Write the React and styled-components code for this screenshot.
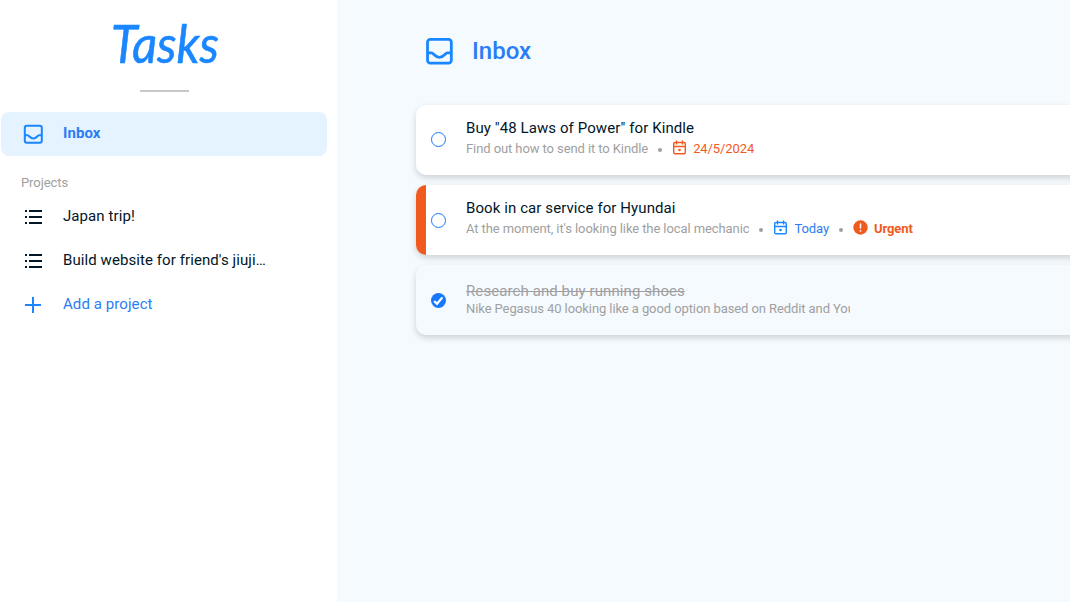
import React from "react";
import styled, { createGlobalStyle } from "styled-components";

const blue = "#1a86ff";
const textBlue = "#2a7df5";
const orange = "#f05a1e";

const GlobalStyle = createGlobalStyle`
  * { box-sizing: border-box; }
  body { margin: 0; overflow: hidden; font-family: Roboto, sans-serif; color: #011627; }
  h1, h2, h3, p, ul { margin: 0; padding: 0; font-weight: 400; }
  svg { display: block; flex: none; }
`;

const Page = styled.div`
  display: flex;
  width: 100%;
  height: 602px;
  overflow: hidden;
  background: #fff;
`;

const Sidebar = styled.aside`
  flex: 0 0 337px;
  padding: 16px 10px 0 1px;
  display: flex;
  flex-direction: column;
  background: #fff;
`;

const Brand = styled.div`
  height: 96px;
  display: flex;
  flex-direction: column;
  align-items: center;
`;

const Wordmark = styled.svg`
  width: 114px;
  height: 56px;
  overflow: visible;
  font-family: Lato, sans-serif;
  font-style: italic;
  font-size: 52px;
  fill: ${blue};
`;

const Divider = styled.div`
  width: 49px;
  height: 2px;
  margin-top: 18px;
  background: #c8c8c8;
`;

const NavItem = styled.div`
  display: flex;
  align-items: center;
  height: 44px;
  padding-left: 22px;
  border-radius: 8px;
  font-size: 15px;
  line-height: 20px;
  letter-spacing: 0.08px;
  font-weight: ${(p) => (p.$active ? 700 : 400)};
  background: ${(p) => (p.$active ? "#e5f2ff" : "transparent")};
  color: ${(p) => (p.$blue ? textBlue : "#011627")};
  span { padding-bottom: ${(p) => (p.$active ? 2 : 0)}px; }
`;

const NavLabel = styled.span`
  width: 204px;
  margin-left: 20px;
  overflow: hidden;
  white-space: nowrap;
  text-overflow: ellipsis;
`;

const SectionLabel = styled.h3`
  height: 38px;
  padding: 18px 0 0 20px;
  font-size: 13px;
  line-height: 17px;
  letter-spacing: -0.08px;
  color: #a0a0a0;
`;

const Main = styled.main`
  flex: 1;
  min-width: 0;
  padding: 37px 0 0 79px;
  background: #f5faff;
`;

const Heading = styled.header`
  display: flex;
  align-items: flex-start;
  height: 68px;
  padding-left: 9px;
`;

const Title = styled.h1`
  margin-left: 19px;
  font-size: 24px;
  line-height: 28px;
  font-weight: 500;
  color: ${textBlue};
`;

const TaskList = styled.div`
  display: flex;
  flex-direction: column;
  gap: 10px;
  width: 700px;
`;

const Card = styled.article`
  display: flex;
  align-items: center;
  height: 70px;
  border-radius: 10px;
  overflow: hidden;
  background: ${(p) => (p.$done ? "#f5faff" : "#fff")};
  box-shadow: 0 3px 6px rgba(0, 0, 0, 0.16);
`;

const Stripe = styled.div`
  width: 10px;
  align-self: stretch;
  background: ${(p) => (p.$urgent ? orange : "transparent")};
`;

const CheckSlot = styled.div`
  width: 40px;
  margin-top: ${(p) => p.$nudge}px;
  padding-left: 5px;
`;

const Body = styled.div`
  align-self: flex-start;
  padding-top: ${(p) => (p.$done ? 17 : 13)}px;
`;

const TaskTitle = styled.h2`
  font-size: 15px;
  line-height: ${(p) => (p.$done ? 18 : 20)}px;
  letter-spacing: 0.09px;
  white-space: nowrap;
  color: ${(p) => (p.$done ? "#a0a0a0" : "#011627")};
  text-decoration: ${(p) => (p.$done ? "line-through" : "none")};
`;

const Details = styled.div`
  display: flex;
  align-items: center;
  height: 20px;
  margin-top: ${(p) => (p.$done ? -1 : 1)}px;
  font-size: 13px;
  line-height: 20px;
  letter-spacing: -0.09px;
  color: #a0a0a0;
`;

const Description = styled.p`
  max-width: 384px;
  overflow: hidden;
  white-space: nowrap;
  line-height: 18px;
`;

const Dot = styled.i`
  width: 4px;
  height: 4px;
  margin: 1px 10px 0;
  border-radius: 50%;
  background: #a0a0a0;
`;

const Tag = styled.span`
  display: flex;
  align-items: center;
  gap: ${(p) => (p.$bold ? 6 : 7)}px;
  letter-spacing: -0.09px;
  color: ${(p) => p.$color};
  font-weight: ${(p) => (p.$bold ? 700 : 400)};
  svg { margin-top: ${(p) => (p.$bold ? -3 : -4)}px; }
`;

const InboxIcon = ({ size }) => (
  <svg width={size} height={size} viewBox="0 0 20 20" fill="none" stroke={blue} strokeWidth="2">
    <rect x="1.8" y="1.7" width="17" height="17" rx="2" />
    <path d="M1.8 11.3H4.6C6.2 11.3 7 14.6 10.3 14.6S14.4 11.3 16 11.3H18.8" />
  </svg>
);

const ListIcon = () => (
  <svg width="20" height="20" viewBox="0 0 20 20" fill="#011627">
    <path d="M2 4h2v2H2zM6 4h13v2H6zM2 10h2v2H2zM6 10h13v2H6zM2 16h2v2H2zM6 16h13v2H6z" />
  </svg>
);

const PlusIcon = () => (
  <svg width="20" height="20" viewBox="0 0 20 20" fill="none" stroke={blue} strokeWidth="2">
    <path d="M10 3v16M2 11h16" />
  </svg>
);

const CalendarIcon = ({ color }) => (
  <svg width="14" height="16" viewBox="0 0 14 16" fill="none" stroke={color} strokeWidth="1.4">
    <rect x="1.7" y="3.5" width="11.6" height="11.2" rx="1.3" />
    <path d="M1.7 7.5h11.6M4.5 1.5v4M10.5 1.5v4" />
    <circle cx="7.5" cy="11" r="1.3" fill={color} stroke="none" />
  </svg>
);

const UrgentIcon = () => (
  <svg width="15" height="15" viewBox="0 0 15 15">
    <circle cx="7.5" cy="7.5" r="7.2" fill={orange} />
    <path d="M7.5 3.9v4.1" stroke="#fff" strokeWidth="1.5" strokeLinecap="round" />
    <circle cx="7.5" cy="10.8" r=".9" fill="#fff" />
  </svg>
);

const CheckCircle = ({ done }) => (
  <svg width="15" height="15" viewBox="0 0 15 15" fill="none">
    <circle cx="7.5" cy="7.5" r={done ? 7.5 : 7} fill={done ? "#1677ff" : "none"} stroke={done ? "none" : "#1677ff"} />
    {done && <path d="M3.2 8.1 6 10.8 11.4 4.4" stroke="#fff" strokeWidth="2.2" />}
  </svg>
);

const tasks = [
  { title: 'Buy "48 Laws of Power" for Kindle', text: "Find out how to send it to Kindle", date: "24/5/2024", color: orange, nudge: -1 },
  { title: "Book in car service for Hyundai", text: "At the moment, it's looking like the local mechanic", date: "Today", color: blue, urgent: true, nudge: 1 },
  { title: "Research and buy running shoes", text: "Nike Pegasus 40 looking like a good option based on Reddit and YouTube", done: true, nudge: 1 },
];

const Task = ({ task }) => (
  <Card $done={task.done}>
    <Stripe $urgent={task.urgent} />
    <CheckSlot $nudge={task.nudge}><CheckCircle done={task.done} /></CheckSlot>
    <Body $done={task.done}>
      <TaskTitle $done={task.done}>{task.title}</TaskTitle>
      <Details $done={task.done}>
        <Description>{task.text}</Description>
        {task.date && (
          <>
            <Dot />
            <Tag $color={task.color === blue ? textBlue : orange}><CalendarIcon color={task.color} />{task.date}</Tag>
          </>
        )}
        {task.urgent && (
          <>
            <Dot />
            <Tag $color={orange} $bold><UrgentIcon />Urgent</Tag>
          </>
        )}
      </Details>
    </Body>
  </Card>
);

export default function App() {
  return (
    <>
      <GlobalStyle />
      <Page>
        <Sidebar>
          <Brand>
            <Wordmark viewBox="0 0 114 56">
              <text x="4" y="47" textLength="108" lengthAdjust="spacingAndGlyphs" stroke={blue} strokeWidth="0.6">Tasks</text>
            </Wordmark>
            <Divider />
          </Brand>
          <NavItem $active $blue><InboxIcon size={20} /><NavLabel>Inbox</NavLabel></NavItem>
          <SectionLabel>Projects</SectionLabel>
          <NavItem><ListIcon /><NavLabel>Japan trip!</NavLabel></NavItem>
          <NavItem><ListIcon /><NavLabel>Build website for friend's jiujitsu school</NavLabel></NavItem>
          <NavItem $blue><PlusIcon /><NavLabel>Add a project</NavLabel></NavItem>
        </Sidebar>
        <Main>
          <Heading><InboxIcon size={28} /><Title>Inbox</Title></Heading>
          <TaskList>{tasks.map((t) => <Task key={t.title} task={t} />)}</TaskList>
        </Main>
      </Page>
    </>
  );
}
